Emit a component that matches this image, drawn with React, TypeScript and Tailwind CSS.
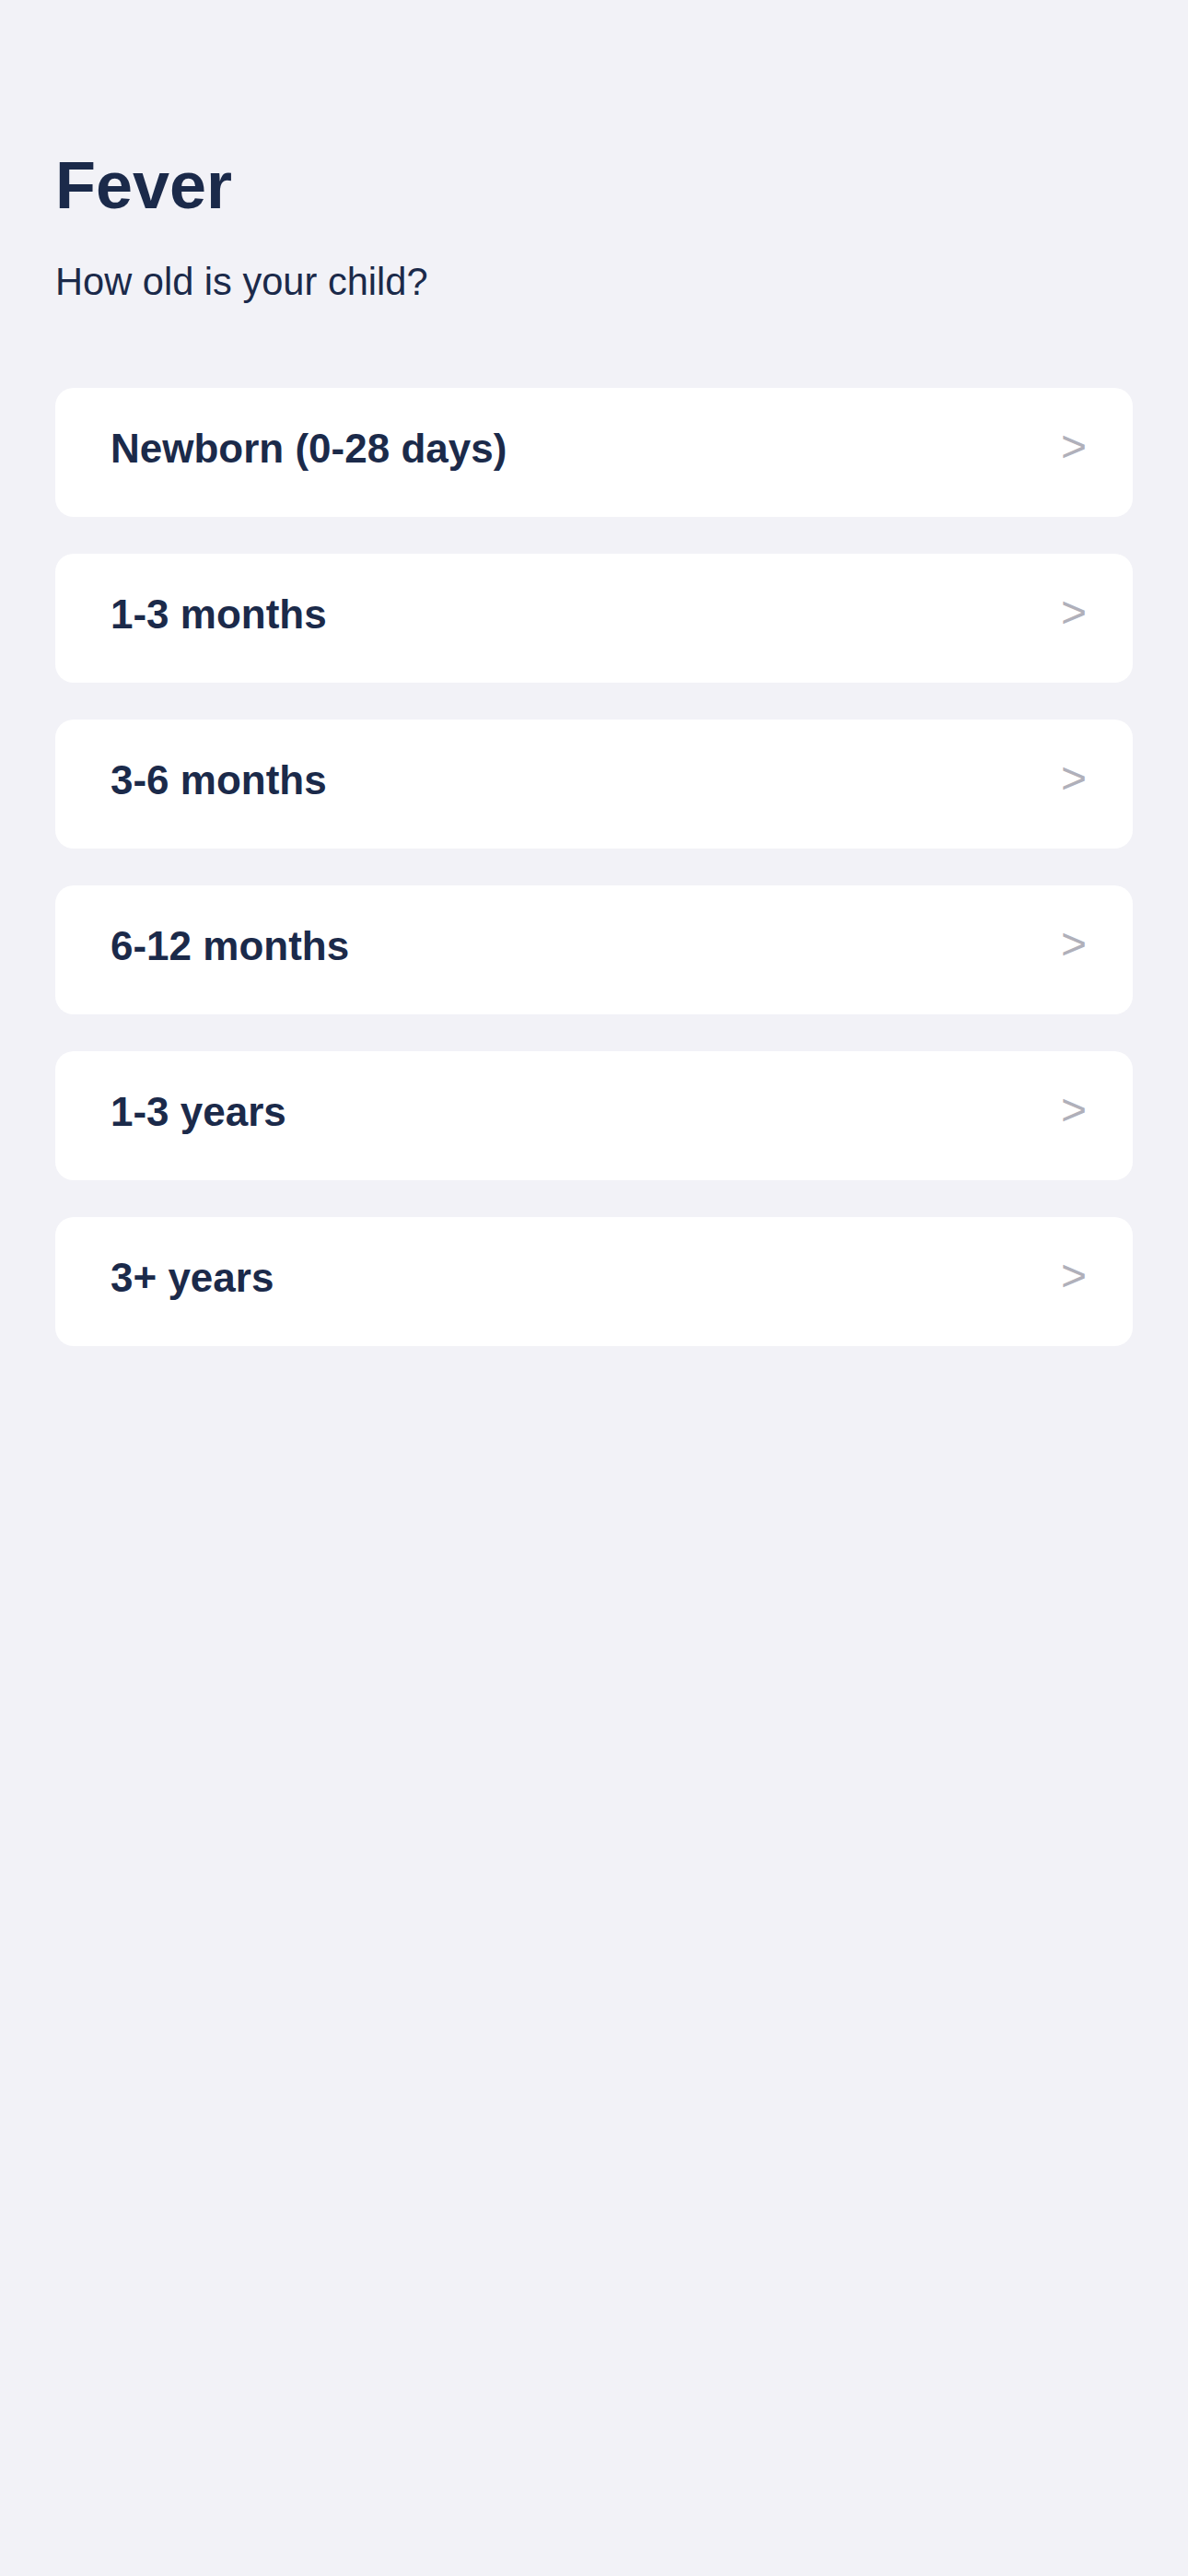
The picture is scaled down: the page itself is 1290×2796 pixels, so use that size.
const AGE_GROUPS = [
  'Newborn (0-28 days)',
  '1-3 months',
  '3-6 months',
  '6-12 months',
  '1-3 years',
  '3+ years',
];

export default function App() {
  return (
    <div
      className="min-h-[2796px] w-full bg-[#f2f2f7] px-[60px] pt-[165px] text-[#1b2a4a]"
      style={{ fontFamily: '"Liberation Sans", Arial, sans-serif' }}
    >
      <h1 className="text-[72px] leading-[72px] font-bold">Fever</h1>
      <p className="mt-[48px] text-[41.6px] leading-[41px]">How old is your child?</p>

      <ul className="mt-[95px] flex flex-col gap-[40px]">
        {AGE_GROUPS.map((label) => (
          <li key={label}>
            <button
              type="button"
              className="flex h-[140px] w-full items-center justify-between rounded-[20px] bg-white pl-[60px] pr-[50px] text-left"
            >
              <span className="pb-[8px] text-[44px] leading-[44px] font-bold">{label}</span>
              <span className="pb-[12px] text-[48px] leading-[48px] text-[#b0b0ba]">&gt;</span>
            </button>
          </li>
        ))}
      </ul>
    </div>
  );
}
